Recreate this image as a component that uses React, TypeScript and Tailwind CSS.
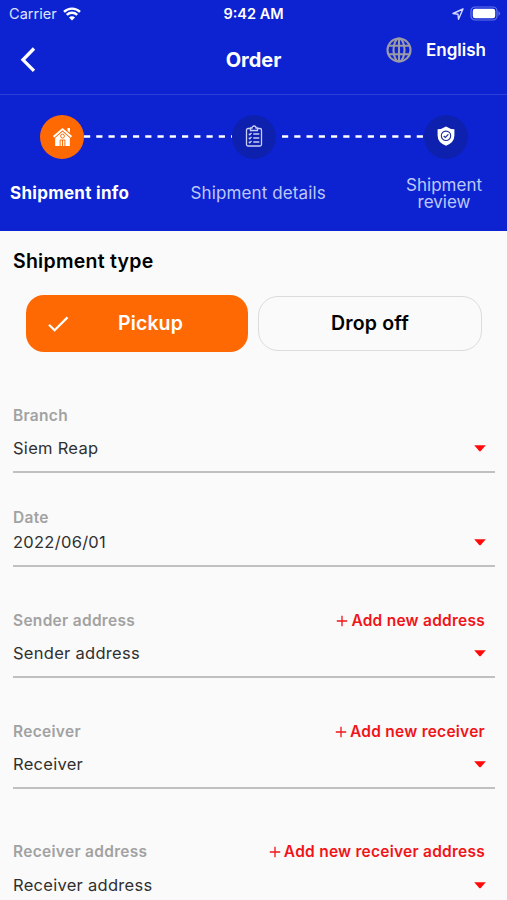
import React from "react";

function Caret() {
  return (
    <svg className="mr-[9px] shrink-0" width="12" height="7" viewBox="0 0 12 7">
      <path d="M.2.3h11.6L7 5.8Q6 6.8 5 5.8z" fill="#ff0a0a" />
    </svg>
  );
}

type FieldProps = { label: string; value: string; action?: string; size: string; gap: string };

function Field({ label, value, action, size, gap }: FieldProps) {
  return (
    <div className={`flex shrink-0 flex-col border-b-2 border-[#c0c0c0] ${size}`}>
      <div className="flex h-[21px] items-center justify-between pr-[10px]">
        <span className="text-[15.5px] leading-[21px] font-semibold tracking-[0.3px] text-[#a2a2a2]">{label}</span>
        {action && (
          <span className="flex items-center gap-[3px] text-[#f01419]">
            <svg width="12" height="12" viewBox="0 0 12 12" stroke="currentColor" strokeWidth="1.3">
              <path d="M6 .8v10.4M.8 6h10.4" />
            </svg>
            <span className="text-[15.5px] leading-[21px] font-semibold tracking-[0.25px] whitespace-nowrap">{action}</span>
          </span>
        )}
      </div>
      <div className={`flex h-6 items-center justify-between ${gap}`}>
        <span className="text-[16.5px] leading-6 tracking-[0.28px] text-[#303030]">{value}</span>
        <Caret />
      </div>
    </div>
  );
}

function Dashes({ offset }: { offset: number }) {
  return (
    <svg className="h-[3px] flex-1">
      <line x1={offset} x2="100%" y1="1.5" y2="1.5" stroke="#fff" strokeWidth="2.7" strokeDasharray="6.2 6.05" />
    </svg>
  );
}

export default function App() {
  return (
    <div className="flex h-[900px] w-[507px] flex-col overflow-hidden bg-[#fafafa] font-['Inter',sans-serif] text-black">
      <header className="flex h-[231px] shrink-0 flex-col bg-[#0d23d1] text-white">
        <div className="grid h-7 grid-cols-3 items-center px-[9px]">
          <div className="flex items-center gap-[6px]">
            <span className="text-[14.5px] tracking-[0.05px] text-[#dfe4ff]">Carrier</span>
            <svg width="18" height="14" viewBox="0 0 18 14" fill="none" stroke="#fff" strokeWidth="2.4">
              <path d="M1 4.9a11.3 11.3 0 0 1 16 0M3.8 7.9a7.4 7.4 0 0 1 10.4 0" />
              <path d="M9 13.6 6 10.5a4.2 4.2 0 0 1 6 0z" fill="#fff" stroke="none" />
            </svg>
          </div>
          <span className="text-center text-[14.5px] font-semibold">9:42 AM</span>
          <div className="-mr-[3px] flex items-center justify-end gap-[6px]">
            <svg width="12" height="12" viewBox="0 0 12 12" fill="none" stroke="#d4dbff" strokeWidth="1.4" strokeLinejoin="round">
              <path d="M11 1 1 5.5l5 .7.5 5z" />
            </svg>
            <svg width="31" height="16" viewBox="0 0 31 16">
              <rect x="1" y="1" width="26" height="13" rx="4" fill="none" stroke="#6674e7" strokeWidth="1.2" />
              <rect x="2.8" y="2.8" width="22.4" height="9.4" rx="2.3" fill="#fff" />
              <path d="M28.5 5q3 2.5 0 5z" fill="#6674e7" />
            </svg>
          </div>
        </div>
        <div className="grid h-[67px] grid-cols-3 border-b border-[#2c40d8]">
          <svg className="ml-5 mt-[19px]" width="16" height="26" viewBox="0 0 16 26" fill="none" stroke="#fff" strokeWidth="3.3">
            <path d="M14 1.5 3 12.800l11 11" />
          </svg>
          <h1 className="mt-[18px] text-center text-[20px] leading-7 font-bold">Order</h1>
          <div className="mt-[9px] mr-[21px] flex h-[26px] items-center justify-end gap-[14px]">
            <svg width="26" height="26" viewBox="0 0 26 26" fill="none" stroke="#9b9ba8" strokeWidth="2.1">
              <circle cx="13" cy="13" r="11.5" />
              <ellipse cx="13" cy="13" rx="5.5" ry="11.5" />
              <path d="M13 1.5v23M2.5 8.7h21M2.5 17.3h21" />
            </svg>
            <span className="mt-px text-[17px] font-semibold">English</span>
          </div>
        </div>
        <div className="mt-[19px] flex h-[45px] items-center pr-[39px] pl-10">
          <div className="flex size-[44px] items-center justify-center rounded-full bg-[#ff6904]">
            <svg className="mb-px" width="21" height="21" viewBox="0 0 22 22" fill="#fff">
              <path d="M1 10.6 11 2l10 8.6-1.3 1.6L11 4.7l-8.7 7.5z" />
              <path d="M3.3 12.200 11 5.700l7.700 6.500V21H3.300z" />
              <path d="M16.200 2.200h2.600v5l-2.600-2.100z" />
              <path d="M2.600 12.700 11 5.400l8.400 7.300" fill="none" stroke="#ff6904" strokeWidth=".7" />
              <path d="M8.500 21v-6.300h5V21M11 14.700V21" fill="none" stroke="#ff6904" strokeWidth="1" />
              <circle cx="11" cy="10.600" r="2" fill="none" stroke="#ff6904" strokeWidth="1" />
            </svg>
          </div>
          <Dashes offset={0} />
          <div className="flex size-[44px] items-center justify-center rounded-full bg-[#0e20ae]">
            <svg className="mb-px" width="18" height="22" viewBox="0 0 18 22" fill="none" stroke="#c9d0f8" strokeWidth="1.300">
              <rect x="1.500" y="3.500" width="15" height="17.500" rx="1.500" />
              <path d="M5.500 5.500V3H7a2 2 0 0 1 4 0h1.500v2.500z" fill="#0e20ae" />
              <path d="m3.800 8.800 1 1 1.700-2m-2.700 5 1 1 1.700-2m-2.700 5 1 1 1.700-2M8.300 9h6M8.300 13h6M8.300 17h6" />
            </svg>
          </div>
          <Dashes offset={6} />
          <div className="flex size-[44px] items-center justify-center rounded-full bg-[#0e20ae]">
            <svg className="mb-px" width="18" height="20" viewBox="0 0 18 20">
              <path d="M9 .4Q13 3 17.400 3.300v6.200Q17.400 16.500 9 19.700.6 16.500.6 9.500V3.300Q5 3 9 .4z" fill="#fff" />
              <circle cx="9" cy="9.800" r="4.700" fill="none" stroke="#1c2b9d" strokeWidth="1.100" />
              <path d="m6.700 10 1.600 1.500 3.100-3.200" fill="none" stroke="#1c2b9d" strokeWidth="1.200" />
            </svg>
          </div>
        </div>
        <div className="flex h-[69px] items-center justify-between pr-[25px] pl-[10px] text-[17px] text-[#bdc8fa]">
          <span className="font-bold tracking-[0.28px] text-white">Shipment info</span>
          <span className="mr-[19px] tracking-[0.12px]">Shipment details</span>
          <span className="text-center leading-[17px]">Shipment<br />review</span>
        </div>
      </header>
      <main className="flex flex-col pr-3 pl-[13px]">
        <h2 className="mt-[17px] text-[19.5px] leading-[26px] font-semibold tracking-[0.25px]">Shipment type</h2>
        <div className="mt-[21px] mr-[13px] ml-[13px] flex h-[57px] shrink-0 items-center gap-[10px] text-[19.5px] font-semibold">
          <button className="grid h-full w-[222px] grid-cols-[65px_1fr_38px] items-center rounded-[18px] bg-[#ff6904] text-white">
            <svg className="ml-[22px]" width="21" height="16" viewBox="0 0 21 16" fill="none" stroke="#fff" strokeWidth="2.2">
              <path d="m1 8.700 5.600 5.600L19.500 1.400" />
            </svg>
            <span className="tracking-[0.1px]">Pickup</span>
          </button>
          <button className="h-[55px] w-[224px] rounded-[20px] border border-[#dcdcdc] tracking-[0.2px]">Drop off</button>
        </div>
        <Field label="Branch" value="Siem Reap" size="mt-[53px] h-[68px]" gap="mt-[10px]" />
        <Field label="Date" value="2022/06/01" size="mt-[34px] h-[60px]" gap="mt-[2px]" />
        <Field label="Sender address" value="Sender address" action="Add new address" size="mt-[43px] h-[68px]" gap="mt-[10px]" />
        <Field label="Receiver" value="Receiver" action="Add new receiver" size="mt-[43px] h-[68px]" gap="mt-[10px]" />
        <Field label="Receiver address" value="Receiver address" action="Add new receiver address" size="mt-[52px] h-[68px]" gap="mt-[11px]" />
      </main>
    </div>
  );
}
